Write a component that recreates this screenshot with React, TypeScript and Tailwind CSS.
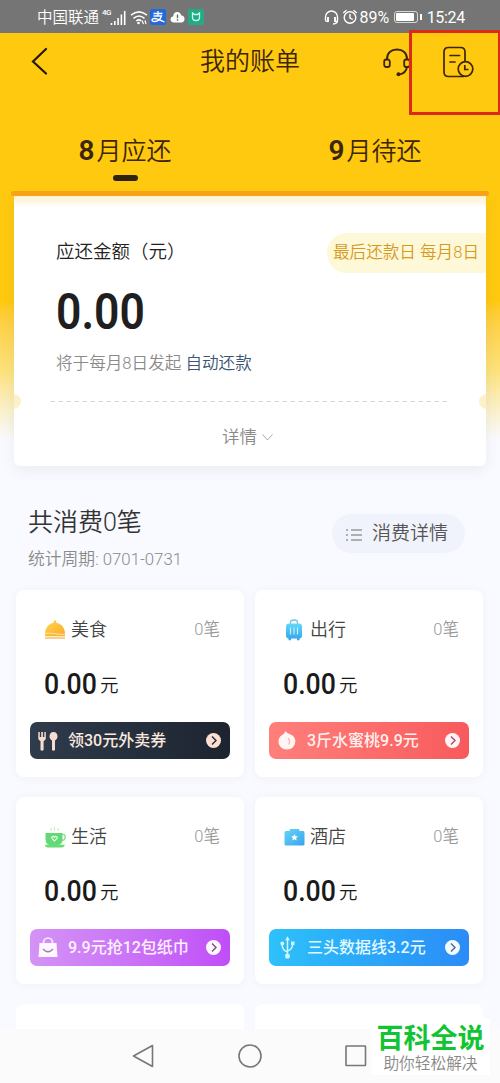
import type { ReactNode } from "react";

type Category = {
  name: string;
  icon: ReactNode;
  promo: string;
  promoIcon: ReactNode;
  promoClass: string;
  textClass: string;
  badgeClass: string;
  arrow: string;
};

function DishIcon() {
  return (
    <svg width="22" height="20" viewBox="0 0 22 20">
      <defs>
        <linearGradient id="dish" x1="0" y1="0" x2="1" y2="1">
          <stop offset="0" stopColor="#ffd54a" />
          <stop offset="1" stopColor="#fba72c" />
        </linearGradient>
      </defs>
      <circle cx="11" cy="1.900" r="1.400" fill="#fcc63f" />
      <path d="M1 14C1 7 5.500 2.700 11 2.700S21 7 21 14v2.200H1Z" fill="url(#dish)" />
      <path d="M1 13.500c6-1.500 13 1.800 20 .8" fill="none" stroke="#ffe9a8" strokeWidth="1" />
      <path d="M1 18h20" stroke="#f9c777" strokeWidth="1.700" />
    </svg>
  );
}

function SuitcaseIcon() {
  return (
    <svg width="18" height="22" viewBox="0 0 18 22">
      <defs>
        <linearGradient id="case" x1="0" y1="0" x2="0" y2="1">
          <stop offset="0" stopColor="#63d8fa" />
          <stop offset="1" stopColor="#36a9ec" />
        </linearGradient>
      </defs>
      <path d="M5.500 5V3.200Q5.500 1 9 1t3.500 2.200V5" fill="none" stroke="#79c6df" strokeWidth="1.300" />
      <rect x="1" y="4.500" width="16" height="15" rx="3" fill="url(#case)" />
      <path d="M3.500 19H6v2.200H3.500zM12 19h2.500v2.200H12z" fill="#36a9ec" />
      <path d="M5.500 8.500v7M9 8.500v7M12.500 8.500v7" stroke="#c5efff" strokeWidth="1.100" />
    </svg>
  );
}

function CupIcon() {
  return (
    <svg width="22" height="21" viewBox="0 0 22 21">
      <path d="M7 1v3M10.500 0v4M14 1v3" stroke="#c9efc4" strokeWidth="1.200" />
      <path d="M1.500 6h17v6q0 6-5 6H6.500q-5 0-5-6Z" fill="#62d979" />
      <path d="M18 7.500h1.500q1.700 0 1.700 2.800T18 13.500" fill="none" stroke="#8bdc94" strokeWidth="1.400" />
      <path d="M.5 17.800h20.500q-1 2.600-3 2.600H3.500q-2 0-3-2.600Z" fill="#67dc75" />
      <path d="m10.500 14-2.300-2.300c-1.400-1.700.9-3.300 2.300-1.500 1.400-1.800 3.700-.2 2.300 1.500Z" fill="none" stroke="#e6ffe1" strokeWidth="1.200" />
    </svg>
  );
}

function HotelIcon() {
  return (
    <svg width="21" height="18" viewBox="0 0 21 18">
      <defs>
        <linearGradient id="hotel" x1="0" y1="0" x2="1" y2="1">
          <stop offset="0" stopColor="#65d4f5" />
          <stop offset="1" stopColor="#3ba4ed" />
        </linearGradient>
      </defs>
      <path d="M2 3h3.500L6 1h9l.5 2H19q1.500 0 1.500 1.500v11.700q0 1.300-1.500 1.300H2Q.5 17.500.5 16.200V4.500Q.5 3 2 3Z" fill="url(#hotel)" />
      <path d="m10.500 6 1 2.300 2.500.2-1.900 1.600.6 2.500-2.200-1.300-2.200 1.300.6-2.500L7 8.500l2.500-.2Z" fill="#fff" />
    </svg>
  );
}

function CutleryIcon() {
  return (
    <svg width="20" height="20" viewBox="0 0 20 20" fill="#f7ddd0">
      <path d="M.300 1h1.500v5h1.400V1h1.700v5h1.400V1h1.500v6.500Q7.800 9.500 5.600 9.900V19q-1.500 1.300-3.100 0V9.900Q.3 9.500.3 7.500Z" />
      <path d="M15.500 1c2.600 0 4 2 4 4.300 0 2-1 3.400-2.500 4.200V19q-1.500 1.300-3 0V9.500c-1.500-.8-2.500-2.200-2.500-4.200C11.500 3 13 1 15.500 1Z" />
    </svg>
  );
}

function PeachIcon() {
  return (
    <svg width="18" height="19" viewBox="0 0 18 19">
      <path d="M7.300 0c1.300 2.200 3.600 2.500 6 3.800C16 5.200 17.300 7.400 17.300 10c0 5-3.700 8.500-8.300 8.500S.5 15.200.5 10.500c0-3 1.200-4.900 3.400-6.200C5.400 3.300 6.800 2.200 7.300 0Z" fill="#fff5f2" />
      <path d="M10.500 7q2 3.500.5 6.500" fill="none" stroke="#f3a09a" strokeWidth="1" />
    </svg>
  );
}

function BagIcon() {
  return (
    <svg width="20" height="21" viewBox="0 0 20 21">
      <path d="M5.500 7V5.500a4.500 4.500 0 0 1 9 0V7" fill="none" stroke="#fbeeff" strokeWidth="1.700" />
      <path d="M1.500 6h17l1 14H.5Z" fill="#fff7ff" />
      <path d="M5 12q5 5.500 10 0" fill="none" stroke="#a878b4" strokeWidth="1.300" />
    </svg>
  );
}

function UsbIcon() {
  return (
    <svg width="15" height="23" viewBox="0 0 15 23" fill="none" stroke="#d2f6ff" strokeWidth="1.500">
      <path d="M7.500 3v16M7.500 16Q2.200 14.500 2 8M7.500 15q5-1.500 5.300-7.500" />
      <path d="m7.500.3 2.300 3.900H5.200Z" fill="#d2f6ff" stroke="none" />
      <circle cx="2.300" cy="7.500" r="1.900" fill="#d2f6ff" stroke="none" />
      <path d="M11 5.500h3.500V9H11z" fill="#d2f6ff" stroke="none" />
      <rect x="5.200" y="17.800" width="4.600" height="4.600" rx="1.500" fill="#d2f6ff" stroke="none" />
    </svg>
  );
}

const categories: Category[] = [
  {
    name: "美食",
    icon: <DishIcon />,
    promo: "领30元外卖券",
    promoIcon: <CutleryIcon />,
    promoClass: "bg-linear-to-r from-[#2f3c4c] to-[#1d2430]",
    textClass: "text-[#fae7de]",
    badgeClass: "bg-[#fbdfd2]",
    arrow: "#2b2730",
  },
  {
    name: "出行",
    icon: <SuitcaseIcon />,
    promo: "3斤水蜜桃9.9元",
    promoIcon: <PeachIcon />,
    promoClass: "bg-linear-to-r from-[#ff7f7b] to-[#f85a5c]",
    textClass: "text-[#fff0ee]",
    badgeClass: "bg-[#fff5f5]",
    arrow: "#a8496f",
  },
  {
    name: "生活",
    icon: <CupIcon />,
    promo: "9.9元抢12包纸巾",
    promoIcon: <BagIcon />,
    promoClass: "bg-linear-to-r from-[#d493f5] to-[#c04df8]",
    textClass: "text-[#fff0ff]",
    badgeClass: "bg-[#fff7ff]",
    arrow: "#77517f",
  },
  {
    name: "酒店",
    icon: <HotelIcon />,
    promo: "三头数据线3.2元",
    promoIcon: <UsbIcon />,
    promoClass: "bg-linear-to-r from-[#2ec1fa] to-[#2b8cf7]",
    textClass: "text-[#e2f9ff]",
    badgeClass: "bg-[#f2fbff]",
    arrow: "#46679c",
  },
];

function StatusBar() {
  return (
    <div className="flex h-[33px] items-center bg-[#757575] pt-px pr-[35px] pl-[37px] text-white">
      <span className="pt-px text-[15.500px] leading-5 font-[350]">中国联通</span>
      <span className="mb-2 ml-[3px] text-[8px] leading-3 font-medium tracking-[-0.5px]">4G</span>
      <svg className="-ml-px" width="16" height="15" viewBox="0 0 16 15" stroke="#fff" strokeWidth="1.600">
        <path d="M1.500 15v-2M4.800 15v-4M8.100 15V8M11.400 15V4.500M14.700 15V1" />
      </svg>
      <svg className="ml-1" width="18" height="15" viewBox="0 0 18 15" fill="none" stroke="#fff" strokeWidth="1.500">
        <path d="M1 5.200q8-6.600 16 0M3.500 8.300q5.500-4.600 11 0M6.300 11q2.700-2.200 5 0" />
        <circle cx="8.500" cy="13" r="1.300" fill="#fff" stroke="none" />
        <path d="m12 10.500 1.500 3.500M15 10.500l1 3.500" strokeWidth="1.200" />
      </svg>
      <span className="ml-[2px] flex size-4 items-center justify-center rounded-[2px] bg-[#2468dd]">
        <svg width="14" height="13" viewBox="0 0 14 13" fill="none" stroke="#fff" strokeWidth="1.300">
          <path d="M2.500 2.500h9M7 0v5M2.500 5h8Q8.500 10.500 3.600 10.500 1 10.500 1 9q0-1.500 2.600-1.500Q6 7.500 13.500 11" />
        </svg>
      </span>
      <svg className="ml-1" width="15" height="12" viewBox="0 0 15 12">
        <path d="M4 11.500Q.5 11.300.5 8.200q0-2.500 2.700-3Q3.700 1 7.300 1q3.200 0 4 3.500 3.200.4 3.200 3.500 0 3.300-3.300 3.500Z" fill="#fff" />
        <path d="M7.500 3.500v3.700M7.500 8.300v1.400" stroke="#666" strokeWidth="1.400" />
      </svg>
      <span className="ml-[3px] flex size-4 items-center justify-center rounded-[2px] bg-[#24ab86]">
        <svg width="10" height="10" viewBox="0 0 10 10" fill="none" stroke="#c9fff0" strokeWidth="1.300">
          <path d="M1.500 1v4.500q0 3 3.500 3t3.500-3V1L6.500 2.500h-3Z" />
        </svg>
      </span>
      <svg className="ml-auto" width="15" height="15" viewBox="0 0 15 15" fill="none" stroke="#fff" strokeWidth="1.400">
        <path d="M1.500 10.500V7a6 6 0 0 1 12 0v3.500q0 3.200-4.500 3.500M1.500 10.500q.5 1 2 1M13.500 10.500q-.5 1-2 1" />
        <path d="M4 7v5M11 7v5" strokeWidth="1.900" />
      </svg>
      <svg className="ml-[3px]" width="16" height="16" viewBox="0 0 16 16" fill="none" stroke="#fff" strokeWidth="1.400">
        <circle cx="8" cy="8.500" r="5.800" />
        <path d="M8 5v4l2.800 1.500M1.200 4 4.500 1.200M14.800 4l-3.300-2.800" />
      </svg>
      <span className="ml-px pt-0.5 text-[16px] leading-5">89%</span>
      <span className="ml-[5px] flex h-3 w-6 rounded-[3px] border border-[#d8d8d8] p-px">
        <span className="w-[18px] rounded-[1px] bg-white" />
      </span>
      <span className="ml-0.5 h-1.5 w-[1.500px] bg-white" />
      <span className="ml-[5px] pt-0.5 text-[16px] leading-5 tracking-[-0.300px]">15:24</span>
    </div>
  );
}

function Header() {
  return (
    <header className="flex h-[57px] items-center justify-between pr-[26px] pl-[31px] text-[#3c2508]">
      <svg className="-mt-0.5" width="18" height="28" viewBox="0 0 18 28" fill="none" stroke="#24190a" strokeWidth="2.200">
        <path d="M15 2 2 14.500 15 26.500" strokeLinecap="round" />
      </svg>
      <h1 className="ml-[68px] text-[25px] leading-8 font-[350]">我的账单</h1>
      <div className="flex items-center gap-[31px]">
        <svg width="28" height="30" viewBox="0 0 28 30" fill="none" stroke="#3c2508" strokeWidth="1.800">
          <path d="M4 12C4 6 8 2.500 14 2.500S24 6 24 12" />
          <rect x="1.200" y="12.500" width="5.600" height="7.500" rx="2" />
          <rect x="21.200" y="12.500" width="5.600" height="7.500" rx="2" />
          <path d="M24 20q-1 6-7 7.300" />
          <circle cx="15.500" cy="27.300" r="2" fill="#3c2508" stroke="none" />
        </svg>
        <svg width="32" height="32" viewBox="0 0 32 32" fill="none" stroke="#3c2508" strokeWidth="1.700">
          <path d="M22 30.500H6.500Q2 30.500 2 26V6q0-4.500 4.500-4.500h12Q23 1.500 23 6v9" />
          <path d="M8 9.500h9.500M8 16h5" strokeLinecap="round" />
          <circle cx="23.500" cy="23" r="7.300" />
          <path d="M22.800 19v4.500h3.700" />
        </svg>
      </div>
    </header>
  );
}

function Tabs() {
  return (
    <nav className="grid h-[101px] grid-cols-2 pt-[45px] text-[#3c2508]">
      <div className="flex flex-col items-center">
        <p className="flex items-baseline text-[25px] leading-8 font-[350]">
          <span className="mr-0.5 text-[28px] font-semibold">8</span>月应还
        </p>
        <span className="mt-[7px] h-1.5 w-[25px] rounded-full bg-[#2e230f]" />
      </div>
      <p className="flex items-baseline justify-center text-[25px] leading-8 font-[350]">
        <span className="mr-0.5 text-[28px] font-semibold">9</span>月待还
      </p>
    </nav>
  );
}

function BillCard() {
  return (
    <section className="relative mx-[14px] mt-[5px] h-[270px] rounded-b-[6px] bg-white shadow-[0_4px_14px_rgba(80,90,110,0.09)]">
      <span className="absolute -top-[5px] -left-[3px] h-[5px] w-[478px] rounded-full bg-[#f8a21a]" />
      <div className="h-3 bg-linear-to-b from-[#fff0cf] to-white" />
      <div className="flex justify-between pt-[25px] pl-[42px]">
        <h2 className="pt-[5px] text-[18.500px] leading-7 font-[350] text-[#222]">应还金额（元）</h2>
        <p className="flex h-10 w-[159px] items-center rounded-l-full bg-[#fdf8d8] pt-px pl-1.5 text-[16.600px] font-[350] whitespace-nowrap text-[#d69a1c]">
          最后还款日 每月8日
        </p>
      </div>
      <p className="mt-[11px] ml-[42px] h-[56px] origin-left scale-x-[0.89] text-[50px] leading-[56px] font-semibold text-[#1f1f1f]">
        0.00
      </p>
      <p className="mt-[12px] ml-[42px] text-[16.600px] leading-6 font-[350] text-[#8a8a8a]">
        将于每月8日发起 <span className="text-[#3d5475]">自动还款</span>
      </p>
      <div className="mt-[18px] flex h-[15px] items-center justify-between overflow-hidden">
        <span className="-ml-2 size-[15px] rounded-full bg-[#fdf1cc]" />
        <svg width="398" height="1">
          <path d="M0 .5h398" stroke="#d2d2d2" strokeDasharray="4 4" />
        </svg>
        <span className="-mr-2 size-[15px] rounded-full bg-[#fdf1cc]" />
      </div>
      <p className="mt-4 flex items-center pl-[208px] text-[17.500px] leading-6 font-[350] text-[#8a8a8a]">
        详情
        <svg className="ml-[5px]" width="11" height="7" viewBox="0 0 11 7" fill="none" stroke="#aaa">
          <path d="m.5.500 5 5.500 5-5.500" />
        </svg>
      </p>
    </section>
  );
}

function CategoryCard({ item }: { item: Category }) {
  return (
    <article className="h-[187px] rounded-[8px] bg-white px-[14px] pt-[26px] shadow-[0_1px_8px_rgba(90,110,160,0.06)]">
      <div className="flex h-7 items-center pr-[10px] pl-[14px] font-[350]">
        <span className="flex w-[22px] justify-center">{item.icon}</span>
        <h3 className="ml-[5px] text-[18px] leading-7 text-[#444]">{item.name}</h3>
        <span className="ml-auto pt-px text-[16.500px] text-[#999]">0笔</span>
      </div>
      <p className="mt-6 flex h-8 items-baseline pl-[14px] leading-8 text-[#1a1a1a]">
        <span className="w-[56px] origin-left scale-x-[0.92] text-[29px] font-medium">0.00</span>
        <span className="-translate-y-0.5 text-[18.500px] font-[350]">元</span>
      </p>
      <div className={`mt-[22px] flex h-[37px] items-center rounded-[7px] pr-[9px] pl-[7px] ${item.promoClass}`}>
        <span className="flex w-[22px] justify-center">{item.promoIcon}</span>
        <span className={`ml-[9px] pt-px text-[16px] leading-6 font-medium whitespace-nowrap ${item.textClass}`}>{item.promo}</span>
        <span className={`ml-auto flex size-[15px] items-center justify-center rounded-full ${item.badgeClass}`}>
          <svg width="6" height="9" viewBox="0 0 6 9" fill="none" stroke={item.arrow} strokeWidth="1.400">
            <path d="m1 .5 4 4-4 4" />
          </svg>
        </span>
      </div>
    </article>
  );
}

function NavBar() {
  return (
    <footer className="absolute inset-x-0 bottom-0 flex h-[54px] items-center bg-[#fbfbfb] pl-[132px]">
      <svg width="22" height="24" viewBox="0 0 22 24" fill="none" stroke="#777" strokeWidth="1.600">
        <path d="M20.500 1.500v21L1.500 12Z" strokeLinejoin="round" />
      </svg>
      <svg className="ml-[84px]" width="24" height="24" viewBox="0 0 24 24" fill="none" stroke="#777" strokeWidth="1.600">
        <circle cx="12" cy="12" r="11" />
      </svg>
      <svg className="ml-[83px]" width="22" height="22" viewBox="0 0 22 22" fill="none" stroke="#777" strokeWidth="1.600">
        <rect x="1" y="1" width="19.500" height="19.500" rx="0.500" />
      </svg>
    </footer>
  );
}

export default function App() {
  return (
    <div className="relative h-[1083px] w-[500px] overflow-hidden bg-[#f9faff] font-['Roboto','Noto_Sans_CJK_SC',sans-serif]">
      <StatusBar />
      <div className="bg-linear-to-b from-[#ffc90f] from-62% via-[#fde27a] via-78% to-[#f9faff] to-94%">
        <Header />
        <Tabs />
        <BillCard />
      </div>

      <main className="pr-[17px] pl-4">
        <div className="flex items-start justify-between pt-[39px] pr-[18px] pl-3">
          <div className="font-[350]">
            <h2 className="text-[25px] leading-9 text-[#333]">共消费0笔</h2>
            <p className="mt-1.5 text-[16.800px] leading-6 text-[#8a8a8a]">统计周期: 0701-0731</p>
          </div>
          <button className="mt-[9px] flex h-[39px] w-[133px] items-center rounded-full bg-[#f0f3fb] pl-[14px] text-[19px] font-[350] text-[#555]">
            <svg className="mt-0.5" width="16" height="14" viewBox="0 0 16 14" stroke="#999" strokeWidth="1.400">
              <path d="M0 2h2M0 7h2M0 12h2M5 2h11M5 7h11M5 12h11" />
            </svg>
            <span className="ml-[10px] pt-px">消费详情</span>
          </button>
        </div>
        <div className="mt-[19px] grid grid-cols-2 gap-x-[11px] gap-y-5">
          {categories.map((item) => (
            <CategoryCard key={item.name} item={item} />
          ))}
          <div className="h-12 rounded-t-[8px] bg-white" />
          <div className="h-12 rounded-t-[8px] bg-white" />
        </div>
      </main>

      <NavBar />
      <div className="absolute top-[30px] left-[409px] h-[85px] w-[92px] border-3 border-[#d92b17]" />
      <div className="absolute top-[1018px] left-[371px] flex h-[57px] w-[119px] flex-col items-center bg-white pt-[5px]">
        <p className="text-[27px] leading-8 font-bold text-[#10c432]">百科全说</p>
        <p className="-mt-[3px] text-[15.700px] leading-6 font-[350] text-[#888]">助你轻松解决</p>
      </div>
    </div>
  );
}
